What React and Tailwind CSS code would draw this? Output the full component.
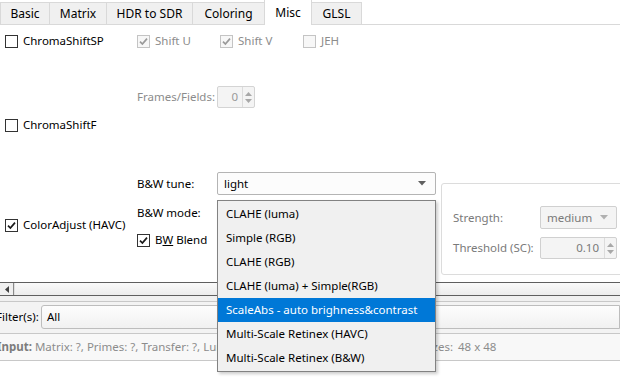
import React from 'react'

const font = { fontFamily: '"Noto Sans", "Open Sans", sans-serif' }

function Check({ checked, disabled }) {
  return (
    <span
      className={
        'flex w-[13px] h-[13px] shrink-0 items-center justify-center border ' +
        (disabled ? 'border-[#c4c4c4] bg-[#f7f7f7]' : 'border-[#333333] bg-white')
      }
    >
      {checked && (
        <svg width="11" height="11" viewBox="0 0 11 11">
          <path
            d="M2 5.6 L4.4 8 L9 2.6"
            fill="none"
            stroke={disabled ? '#9a9a9a' : '#1a1a1a'}
            strokeWidth="1.7"
          />
        </svg>
      )}
    </span>
  )
}

function CheckLabel({ checked, disabled, children }) {
  return (
    <div className="flex h-[14px] items-center gap-[5px] whitespace-nowrap">
      <Check checked={checked} disabled={disabled} />
      <span className={disabled ? 'text-[#8c8c8c]' : 'text-black'}>{children}</span>
    </div>
  )
}

function Arrow({ color = '#606060' }) {
  return (
    <svg width="8" height="5" viewBox="0 0 8 5">
      <path d="M0 0 L8 0 L4 4.5 Z" fill={color} />
    </svg>
  )
}

function SpinArrows() {
  return (
    <div className="flex w-[12px] flex-col items-center justify-center gap-[3px] self-stretch border-l border-[#dcdcdc]">
      <svg width="7" height="4" viewBox="0 0 7 4">
        <path d="M0 4 L7 4 L3.5 0 Z" fill="#a8a8a8" />
      </svg>
      <svg width="7" height="4" viewBox="0 0 7 4">
        <path d="M0 0 L7 0 L3.5 4 Z" fill="#a8a8a8" />
      </svg>
    </div>
  )
}

const tabs = [
  ['Basic', 50],
  ['Matrix', 58],
  ['HDR to SDR', 87],
  ['Coloring', 73],
  ['Misc', 48],
  ['GLSL', 51],
]

const items = [
  'CLAHE (luma)',
  'Simple (RGB)',
  'CLAHE (RGB)',
  'CLAHE (luma) + Simple(RGB)',
  'ScaleAbs - auto brighness&contrast',
  'Multi-Scale Retinex (HAVC)',
  'Multi-Scale Retinex (B&W)',
]

export default function App() {
  return (
    <div className="relative h-[385px] w-[620px] overflow-hidden bg-white text-[11.5px] leading-none" style={font}>
      {/* tab bar */}
      <div className="flex h-[25px] items-end border-b border-[#d9d9d9]">
        {tabs.map(([name, w], i) => {
          const sel = name === 'Misc'
          return (
            <div
              key={name}
              style={{ width: w }}
              className={
                'flex items-center justify-center border border-[#d9d9d9] border-b-0 text-[12px] text-black ' +
                (i > 0 ? '-ml-px ' : '') +
                (sel ? 'relative z-10 -mb-px h-[26px] bg-white' : 'h-[22px] bg-[#f0f0f0]')
              }
            >
              {name}
            </div>
          )
        })}
      </div>

      {/* tab page */}
      <div className="flex h-[257px]">
        <div className="flex w-[137px] shrink-0 flex-col pl-[5px]">
          <div className="mt-[9px]">
            <CheckLabel>ChromaShiftSP</CheckLabel>
          </div>
          <div className="mt-[70px]">
            <CheckLabel>ChromaShiftF</CheckLabel>
          </div>
          <div className="mt-[86px]">
            <CheckLabel checked>ColorAdjust (HAVC)</CheckLabel>
          </div>
        </div>

        <div className="flex min-w-0 flex-1 flex-col">
          <div className="mt-[9px] flex">
            <div className="w-[83px]">
              <CheckLabel checked disabled>Shift U</CheckLabel>
            </div>
            <div className="w-[83px]">
              <CheckLabel checked disabled>Shift V</CheckLabel>
            </div>
            <div className="w-[83px]">
              <CheckLabel disabled>JEH</CheckLabel>
            </div>
          </div>

          <div className="mt-[38px] flex h-[22px] items-center">
            <span className="w-[80px] text-[#8c8c8c]">Frames/Fields:</span>
            <div className="flex h-[22px] w-[38px] items-center rounded-[2px] border border-[#d4d4d4] bg-[#f4f4f4]">
              <span className="flex-1 pr-[4px] text-right text-[#9a9a9a]">0</span>
              <SpinArrows />
            </div>
          </div>

          <div className="flex">
            <div className="flex w-[304px] shrink-0 flex-col">
              <div className="mt-[64px] flex h-[23px] items-center">
                <span className="w-[80px] text-black">B&amp;W tune:</span>
                <div className="flex h-[23px] w-[219px] items-center justify-between rounded-[2px] border border-[#b4b4b4] bg-[#fcfcfc] pl-[6px] pr-[9px] text-black">
                  <span>light</span>
                  <Arrow />
                </div>
              </div>
              <div className="mt-[6px] flex h-[23px] items-center">
                <span className="w-[80px] text-black">B&amp;W mode:</span>
              </div>
              <div className="mt-[9px]">
                <CheckLabel checked>
                  B<span className="underline">W</span> Blend
                </CheckLabel>
              </div>
            </div>

            <div className="mt-[75px] h-[92px] w-[200px] shrink-0 rounded-[3px] border border-[#dcdcdc] pl-[11px]">
              <div className="mt-[22px] flex h-[23px] items-center">
                <span className="w-[87px] text-[#7a7a7a]">Strength:</span>
                <div className="flex h-[23px] w-[77px] items-center justify-between rounded-[2px] border border-[#d0d0d0] bg-[#f4f4f4] pl-[6px] pr-[8px] text-[#7a7a7a]">
                  <span>medium</span>
                  <Arrow color="#b0b0b0" />
                </div>
              </div>
              <div className="mt-[8px] flex h-[22px] items-center">
                <span className="w-[87px] text-[#7a7a7a]">Threshold (SC):</span>
                <div className="flex h-[22px] w-[77px] items-center rounded-[2px] border border-[#d0d0d0] bg-[#f4f4f4]">
                  <span className="flex-1 pr-[5px] text-right text-[#7a7a7a]">0.10</span>
                  <SpinArrows />
                </div>
              </div>
            </div>
          </div>
        </div>
      </div>

      {/* horizontal scrollbar */}
      <div className="flex h-[14px] border-y border-[#5f5f5f] bg-[#f6f6f6]">
        <div className="flex w-[14px] items-center justify-center border-r border-[#8a8a8a] bg-[#efefef]">
          <svg width="4" height="7" viewBox="0 0 4 7">
            <path d="M4 0 L4 7 L0 3.5 Z" fill="#404040" />
          </svg>
        </div>
        <div className="flex-1 border-l border-[#e0e0e0] bg-gradient-to-b from-[#fafafa] to-[#ececec]" />
      </div>

      {/* filter row */}
      <div className="h-[5px] bg-[#f0f0f0]" />
      <div className="flex h-[32px] items-start border-t border-[#c8c8c8] bg-[#f3f3f3] pt-[3px]">
        <span className="-ml-[4px] mt-[6px] w-[45px] whitespace-nowrap text-black">Filter(s):</span>
        <div className="flex h-[24px] flex-1 items-center rounded-l-[3px] border border-[#bdbdbd] bg-gradient-to-b from-[#fdfdfd] to-[#f1f1f1] pl-[5px] text-black">
          All
        </div>
      </div>

      {/* input info */}
      <div className="flex h-[28px] items-center border-y border-[#c8c8c8] bg-[#f8f8f8] text-[#8c8c8c]">
        <span className="-ml-[3px] w-[220px] shrink-0 overflow-hidden whitespace-nowrap">
          <b className="font-bold text-[#7c7c7c]">Input:</b> Matrix: ?, Primes: ?, Transfer: ?, Luma: ?
        </span>
        <span className="flex w-[236px] shrink-0 justify-end overflow-hidden whitespace-nowrap">Frames: ?, Sizes:</span>
        <span className="ml-[5px] whitespace-nowrap">48 x 48</span>
      </div>

      {/* dropdown popup */}
      <div className="absolute left-[217px] top-[200px] w-[219px] border border-[#828282] bg-[#f0f0f0] py-[1px] shadow-[2px_2px_3px_rgba(0,0,0,0.2)]">
        {items.map((t, i) => (
          <div
            key={t}
            className={
              'flex h-[24px] items-center pl-[8px] ' +
              (i === 4 ? 'bg-[#0078d7] text-white' : 'text-black')
            }
          >
            {t}
          </div>
        ))}
      </div>
    </div>
  )
}
